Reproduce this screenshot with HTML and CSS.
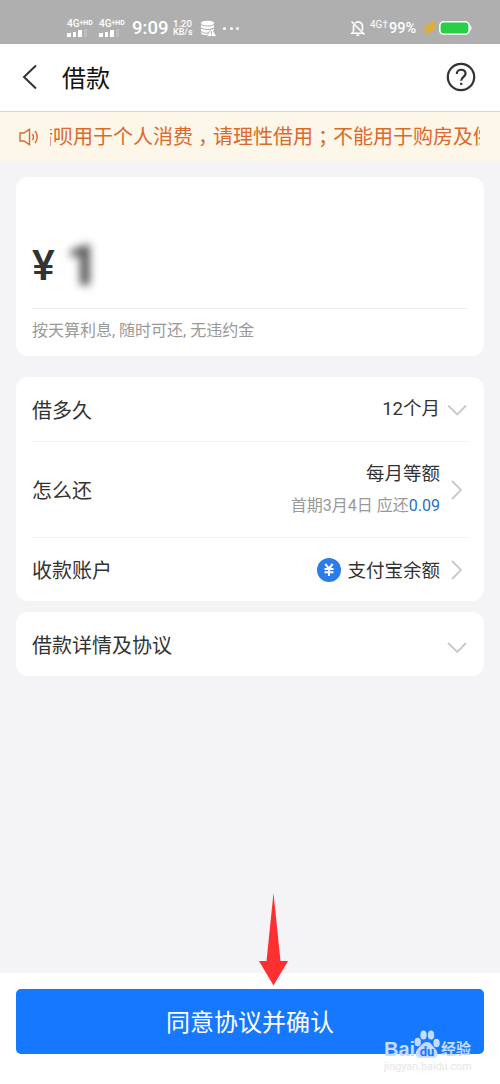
FILE: index.html
```html
<!DOCTYPE html>
<html lang="zh-CN">
<head>
  <meta charset="UTF-8" />
  <meta name="viewport" content="width=device-width, initial-scale=1.0" />
  <title>借款</title>
  <link rel="stylesheet" href="styles.css">
</head>
<body>
  <div class="status">
    <div class="sim">
      <span class="net">4G<sup>+HD</sup></span>
      <div class="bars"><i class="b1"></i><i class="b2"></i><i class="b3"></i><i class="b4"></i></div>
    </div>
    <div class="sim">
      <span class="net">4G<sup>+HD</sup></span>
      <div class="bars"><i class="b1"></i><i class="b2"></i><i class="b3"></i><i class="b4"></i></div>
    </div>
    <span class="time">9:09</span>
    <div class="speed"><span>1.20</span><span>KB/s</span></div>
    <svg class="storage" width="17" height="17" viewBox="0 0 17 17">
      <path d="M1 3c0-3 13-3 13 0v10c0 3-13 3-13 0z" fill="#fff"/>
      <path d="M1 4.500c3 2 10 2 13 0M1 8c3 2 10 2 13 0M1 11.500c3 2 6 2 8 1" fill="none" stroke="#afafaf"/>
      <path d="M11.500 8l5.200 8.500H6.500z" fill="#fff" stroke="#afafaf" stroke-width=".8"/>
      <path d="M11.500 11v3M11.500 14.700v1" stroke="#afafaf"/>
    </svg>
    <div class="dots"><i></i><i></i><i></i></div>
    <div class="status-right">
      <svg width="16" height="17" viewBox="0 0 16 17" fill="none" stroke="#fff" stroke-width="1.600">
        <path d="M3.500 5v6.500L2 13.200h11.500M5 3.200C8 .5 12.500 2.500 12.500 6.500v4M6.300 15.300h3M1.500 1.500l13 13"/>
      </svg>
      <span class="net up">4G†</span>
      <span class="percent">99%</span>
      <svg class="bolt" width="14" height="14" viewBox="0 0 14 14"><path d="M9 1L1 8l2.500 1L3 13l9-5.500-2-1L13 2z" fill="#dfae35" stroke="#dfae35"/></svg>
      <svg width="33" height="14" viewBox="0 0 33 14">
        <rect x=".8" y=".8" width="29.400" height="12.400" rx="4" fill="#27cf45" stroke="#fff" stroke-width="1.600"/>
        <path d="M31 4.500c2 .5 2 4.500 0 5z" fill="#fff"/>
      </svg>
    </div>
  </div>

  <div class="nav">
    <svg width="16" height="26" viewBox="0 0 16 26" fill="none" stroke="#333" stroke-width="2"><path d="M14 1.500L2 13l12 11.500"/></svg>
    <h1>借款</h1>
    <svg class="help" width="30" height="30" viewBox="0 0 30 30" fill="none" stroke="#333" stroke-width="2.200">
      <circle cx="15" cy="15" r="13.200"/>
      <path d="M10.800 12c0-5.600 8.800-5.600 8.800-.4 0 3.200-4.400 3.400-4.400 7.200M15.200 20.800v2.300"/>
    </svg>
  </div>

  <div class="notice">
    <svg width="22" height="18" viewBox="0 0 22 18" fill="none" stroke="#da6a2b" stroke-width="1.400">
      <path d="M2 5h4l5.500-3.700v15.400L6 13H2zM14.500 6q2 3 0 6M17 3q4.500 6 0 12"/>
    </svg>
    <div class="marquee"><p>借呗用于个人消费<b>，</b>请理性借用<b>；</b>不能用于购房及偿</p></div>
  </div>

  <div class="main">
    <div class="card amount">
      <div class="money"><span class="yen">¥</span><span class="number">1</span></div>
      <p class="tip">按天算利息, 随时可还, 无违约金</p>
    </div>

    <div class="card list">
      <div class="row">
        <span class="label">借多久</span>
        <span class="value">12个月</span>
        <svg class="arrow" width="20" height="20" viewBox="0 0 20 20"><path d="M1 6.500l9.300 9 8.700-9"/></svg>
      </div>
      <div class="row tall">
        <span class="label">怎么还</span>
        <div class="value">
          <div>每月等额</div>
          <div class="sub">首期3月4日 应还<span>0.09</span></div>
        </div>
        <svg class="arrow" width="20" height="20" viewBox="0 0 20 20"><path d="M5 1l9 9-9 9"/></svg>
      </div>
      <div class="row">
        <span class="label">收款账户</span>
        <span class="value account">
          <svg width="24" height="24" viewBox="0 0 24 24">
            <circle cx="12" cy="12" r="12" fill="#2b7bea"/>
            <path d="M8.300 6l3.700 4.600L15.700 6M7.500 11h9M7.500 14.300h9M12 10.500V18" fill="none" stroke="#fff" stroke-width="2"/>
          </svg>
          <span>支付宝余额</span>
        </span>
        <svg class="arrow" width="20" height="20" viewBox="0 0 20 20"><path d="M5 1l9 9-9 9"/></svg>
      </div>
    </div>

    <div class="card detail">
      <div class="row">
        <span class="label">借款详情及协议</span>
        <svg class="arrow" width="20" height="20" viewBox="0 0 20 20"><path d="M1 9l9.300 9L19 9"/></svg>
      </div>
    </div>
  </div>

  <div class="footer">
    <button class="confirm">同意协议并确认</button>
    <svg class="pointer" width="30" height="94" viewBox="0 0 30 94"><path d="M14.500 0L21.500 68H29L14.500 92.500 0 68h7.500z" fill="#fc3030"/></svg>
    <div class="watermark">
      <div class="brand">
        <span class="bai">Bai</span>
        <svg width="26" height="29" viewBox="0 0 26 29">
          <ellipse cx="3.700" cy="12" rx="3.200" ry="4.300"/>
          <ellipse cx="9.500" cy="5" rx="3.200" ry="4.500"/>
          <ellipse cx="17" cy="5" rx="3.200" ry="4.500"/>
          <ellipse cx="22.500" cy="13" rx="3.200" ry="4.300"/>
          <path d="M13 12c4 0 5 3.500 8 6.500 4 4 3 9.500-2 9.500-3 0-9-.500-12 0-6 0-7-5.500-3-9.500 3-3 5-6.500 9-6.500z"/>
          <text x="13" y="26" text-anchor="middle">du</text>
        </svg>
        <span class="exp">经验</span>
      </div>
      <div class="site">jingyan.baidu.com</div>
    </div>
  </div>
</body>
</html>
```
FILE: styles.css
```css
* {
  margin: 0;
  padding: 0;
  box-sizing: border-box;
}
body {
  height: 1084px;
  display: flex;
  flex-direction: column;
  background-color: #f4f4f7;
  color: #333;
  font-family: Roboto, "Noto Sans CJK SC", sans-serif;
  overflow: hidden;
}
svg {
  display: block;
  flex-shrink: 0;
}

/* status bar */
.status {
  height: 44px;
  padding: 12px 28px 0 67px;
  display: flex;
  align-items: center;
  background-color: #afafaf;
  color: #fff;
}
.sim {
  width: 27px;
  height: 19px;
  margin-right: 5px;
  white-space: nowrap;
}
.net {
  display: block;
  font-size: 10px;
  font-weight: 500;
  line-height: 10px;
}
.net sup {
  font-size: 7px;
  font-weight: 700;
  line-height: 0;
  vertical-align: 2px;
}
.bars {
  height: 8px;
  display: flex;
  align-items: flex-end;
  gap: 2px;
}
.bars i {
  width: 3.500px;
  background-color: #fff;
}
.bars .b1 { height: 4px; }
.bars .b2 { height: 5px; }
.bars .b3 { height: 7px; }
.bars .b4 { height: 8px; opacity: 0.2; }
.time {
  width: 41px;
  margin-left: 1px;
  font-size: 18.500px;
  font-weight: 500;
}
.speed {
  width: 27px;
  display: flex;
  flex-direction: column;
  font-size: 9px;
  font-weight: 500;
  line-height: 9px;
}
.speed span:first-child {
  font-size: 9.500px;
}
.dots {
  margin-left: 6px;
  display: flex;
  gap: 3.500px;
}
.dots i {
  width: 3px;
  height: 3px;
  border-radius: 50%;
  background-color: #fff;
}
.status-right {
  margin-left: auto;
  display: flex;
  align-items: center;
}
.up {
  width: 23px;
  padding-left: 4px;
  height: 16px;
  font-weight: 400;
}
.percent {
  width: 34px;
  font-size: 14.500px;
  font-weight: 500;
}
.bolt {
  margin-right: 2px;
}

.nav {
  height: 68px;
  padding: 0 24px 1px 22px;
  display: flex;
  align-items: center;
  background-color: #fff;
  border-bottom: 1px solid #d5d5da;
}
.nav h1 {
  margin-left: 24px;
  padding-bottom: 2px;
  font-size: 24px;
  font-weight: 400;
  color: #111;
}
.help {
  margin-left: auto;
}

.notice {
  height: 49px;
  padding: 0 20px 0 18px;
  display: flex;
  align-items: center;
  background-color: #fdf7e9;
  color: #da6a2b;
}
.marquee {
  flex: 1;
  margin-left: 10px;
  overflow: hidden;
}
.marquee p {
  margin-left: -17px;
  font-size: 20px;
  line-height: 30px;
  white-space: nowrap;
}
.marquee b {
  display: inline-block;
  width: 20px;
  text-indent: 5px;
  font-weight: 400;
}

.main {
  flex: 1;
  padding: 16px 16px 0;
}
.card {
  padding: 0 16px;
  background-color: #fff;
  border-radius: 12px;
}
.amount {
  height: 179px;
  margin-bottom: 21px;
}
.money {
  height: 132px;
  padding-top: 61px;
  display: flex;
  border-bottom: 1px solid #eee;
}
.yen {
  width: 34px;
  font-size: 43px;
  font-weight: 500;
  line-height: 54px;
}
.number {
  font-size: 58px;
  font-weight: 900;
  line-height: 54px;
  color: #555;
  filter: blur(4px);
}
.tip {
  font-size: 16px;
  line-height: 43px;
  color: #999;
}

.list {
  margin-bottom: 11px;
}
.row {
  height: 64px;
  display: flex;
  align-items: center;
  border-bottom: 1px solid #f2f2f2;
}
.list .row:first-child {
  height: 65px;
}
.row:last-child {
  height: 63px;
  border-bottom: none;
}
.detail .row:last-child {
  height: 64px;
}
.row.tall {
  height: 96px;
}
.label {
  font-size: 20px;
}
.value {
  margin-left: auto;
  font-size: 18.500px;
  text-align: right;
  line-height: 32px;
}
.tall .value {
  padding-top: 1px;
}
.sub {
  font-size: 16px;
  color: #999;
}
.sub span {
  color: #2872bd;
}
.account {
  display: flex;
  align-items: center;
  gap: 6px;
}
.account span {
  padding-top: 2px;
}
.arrow {
  margin-left: 7px;
  margin-right: 1px;
  fill: none;
  stroke: #c8c8c8;
  stroke-width: 1.800;
}
.detail .arrow {
  margin-left: auto;
}

.footer {
  position: relative;
  height: 111px;
  padding: 16px;
  background-color: #fff;
}
.confirm {
  display: block;
  width: 100%;
  height: 65px;
  padding-bottom: 3px;
  border: none;
  border-radius: 5px;
  background-color: #1678ff;
  color: #fff;
  font-family: inherit;
  font-size: 24px;
}
.pointer {
  position: absolute;
  left: 259px;
  top: -80px;
}
.watermark {
  position: absolute;
  left: 384px;
  top: 57px;
}
.brand {
  height: 29px;
  display: flex;
  align-items: flex-end;
  color: #c3dcff;
  font-weight: 700;
  line-height: 20px;
}
.bai {
  width: 30px;
  font-family: "Liberation Sans", sans-serif;
  font-size: 20px;
}
.brand svg {
  fill: #c3dcff;
}
.brand text {
  font-size: 13px;
  fill: #1678ff;
}
.exp {
  margin-left: 1px;
  font-size: 15px;
}
.site {
  font-size: 10.800px;
  line-height: 15px;
  color: #e6e6e6;
}
```
